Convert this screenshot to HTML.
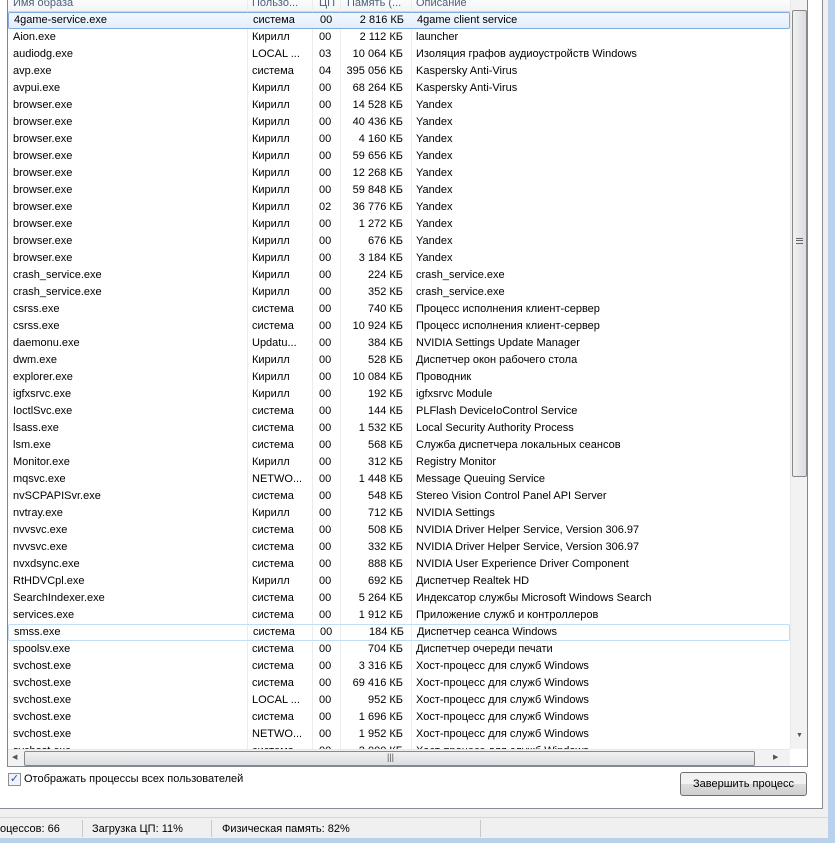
<!DOCTYPE html>
<html><head><meta charset="utf-8"><style>
*{margin:0;padding:0;box-sizing:border-box}
body{width:835px;height:843px;overflow:hidden;background:#b9d1ea;font-family:"Liberation Sans","DejaVu Sans",sans-serif;font-size:11px;color:#000;position:relative}
#win{position:absolute;left:0;top:0;width:828px;height:838px;background:#f0f0f0}
#panel{position:absolute;left:0;top:-5px;width:823px;height:814px;background:#fff;border:1px solid #898c95;border-left:none}
#list{position:absolute;left:7px;top:-5px;width:801px;height:772px;border:1px solid #828790;background:#fff;overflow:hidden}
.hdr{position:absolute;left:0;top:0;width:783px;height:16px;background:linear-gradient(#fff,#f3f4f6);border-bottom:1px solid #d5d5d5}
.hdr span{position:absolute;top:1px;color:#4c607a}
.row{position:absolute;left:0;width:782px;height:17px;line-height:17px;white-space:nowrap}
.row span{position:absolute;top:0}
.c1{left:5px}.c2{left:244px}.c3{left:311px}.c4{left:333px;width:62px;text-align:right}.c5{left:408px}
.sel span,.hov span{top:-1px}
.vl{position:absolute;top:0;height:760px;width:1px;background:#ececec}
.sel{background:linear-gradient(#f1f7fe,#e3eefc);border:1px solid #84acdd;border-radius:2px}
.hov{border:1px solid #c5dcf5;border-radius:2px}
#vs{position:absolute;left:782px;top:0;width:17px;height:753px;background:#f2f2f2;border-left:1px solid #e8e8e8}
#thumb{position:absolute;left:1px;top:14px;width:15px;height:467px;background:linear-gradient(90deg,#f1f1f1,#dcdde2);border:1px solid #888;border-radius:2px}
#hs{position:absolute;left:0;top:753px;width:782px;height:17px;background:#f2f2f2;border-top:1px solid #e8e8e8}
#hthumb{position:absolute;left:16px;top:1px;width:731px;height:15px;background:linear-gradient(#f1f1f1,#dcdde2);border:1px solid #888;border-radius:2px}
.btn{position:absolute;left:680px;top:772px;width:127px;height:24px;border:1px solid #707070;border-radius:3px;background:linear-gradient(#f2f2f2 50%,#dddddd 50%,#cfcfcf);text-align:center;line-height:22px}
#status{position:absolute;left:0;top:817px;width:828px;height:21px;border-top:1px solid #d7d7d7;line-height:22px}
#status span{position:absolute;top:0}
.sep{position:absolute;top:2px;width:1px;height:17px;background:#c8c8c8}
</style></head><body>
<div id="win">
<div id="panel"></div>
<div id="list">
<div class="hdr"><span style="left:5px">Имя образа</span><span style="left:244px">Пользо...</span><span style="left:311px">ЦП</span><span style="left:339px">Память (...</span><span style="left:408px">Описание</span></div>
<div class="vl" style="left:239px"></div><div class="vl" style="left:304px"></div><div class="vl" style="left:332px"></div><div class="vl" style="left:403px"></div>
<div id="rows"></div>
<div id="vs"><div style="position:absolute;top:736px;left:5px;font-size:7px;color:#555">▼</div><div id="thumb"><div style="position:absolute;left:3px;top:227px;width:7px;height:6px;border-top:1px solid #666;border-bottom:1px solid #666"><div style="margin-top:1px;height:2px;border-top:1px solid #666"></div></div></div></div>
<div id="hs"><div style="position:absolute;left:4px;top:3px;font-size:7px;color:#555">◀</div><div id="hthumb"><div style="position:absolute;left:362px;top:0;font-size:9px;color:#555">|||</div></div><div style="position:absolute;left:765px;top:3px;font-size:7px;color:#555">▶</div></div>
</div>
<div style="position:absolute;left:8px;top:773px;width:13px;height:13px;border:1px solid #8f8f8f;background:#eef3fb;color:#2a4f9c;font-size:11px;line-height:11px;text-align:center">✓</div>
<div style="position:absolute;left:24px;top:773px">Отображать процессы всех пользователей</div>
<div class="btn">Завершить процесс</div>
<div id="status">
<span style="left:0">оцессов: 66</span><div class="sep" style="left:82px"></div>
<span style="left:92px">Загрузка ЦП: 11%</span><div class="sep" style="left:211px"></div>
<span style="left:222px">Физическая память: 82%</span><div class="sep" style="left:480px"></div>
</div>
</div>
<script>
var d=[["4game-service.exe","система","00","2 816 КБ","4game client service"],["Aion.exe","Кирилл","00","2 112 КБ","launcher"],["audiodg.exe","LOCAL ...","03","10 064 КБ","Изоляция графов аудиоустройств Windows"],["avp.exe","система","04","395 056 КБ","Kaspersky Anti-Virus"],["avpui.exe","Кирилл","00","68 264 КБ","Kaspersky Anti-Virus"],["browser.exe","Кирилл","00","14 528 КБ","Yandex"],["browser.exe","Кирилл","00","40 436 КБ","Yandex"],["browser.exe","Кирилл","00","4 160 КБ","Yandex"],["browser.exe","Кирилл","00","59 656 КБ","Yandex"],["browser.exe","Кирилл","00","12 268 КБ","Yandex"],["browser.exe","Кирилл","00","59 848 КБ","Yandex"],["browser.exe","Кирилл","02","36 776 КБ","Yandex"],["browser.exe","Кирилл","00","1 272 КБ","Yandex"],["browser.exe","Кирилл","00","676 КБ","Yandex"],["browser.exe","Кирилл","00","3 184 КБ","Yandex"],["crash_service.exe","Кирилл","00","224 КБ","crash_service.exe"],["crash_service.exe","Кирилл","00","352 КБ","crash_service.exe"],["csrss.exe","система","00","740 КБ","Процесс исполнения клиент-сервер"],["csrss.exe","система","00","10 924 КБ","Процесс исполнения клиент-сервер"],["daemonu.exe","Updatu...","00","384 КБ","NVIDIA Settings Update Manager"],["dwm.exe","Кирилл","00","528 КБ","Диспетчер окон рабочего стола"],["explorer.exe","Кирилл","00","10 084 КБ","Проводник"],["igfxsrvc.exe","Кирилл","00","192 КБ","igfxsrvc Module"],["IoctlSvc.exe","система","00","144 КБ","PLFlash DeviceIoControl Service"],["lsass.exe","система","00","1 532 КБ","Local Security Authority Process"],["lsm.exe","система","00","568 КБ","Служба диспетчера локальных сеансов"],["Monitor.exe","Кирилл","00","312 КБ","Registry Monitor"],["mqsvc.exe","NETWO...","00","1 448 КБ","Message Queuing Service"],["nvSCPAPISvr.exe","система","00","548 КБ","Stereo Vision Control Panel API Server"],["nvtray.exe","Кирилл","00","712 КБ","NVIDIA Settings"],["nvvsvc.exe","система","00","508 КБ","NVIDIA Driver Helper Service, Version 306.97"],["nvvsvc.exe","система","00","332 КБ","NVIDIA Driver Helper Service, Version 306.97"],["nvxdsync.exe","система","00","888 КБ","NVIDIA User Experience Driver Component"],["RtHDVCpl.exe","Кирилл","00","692 КБ","Диспетчер Realtek HD"],["SearchIndexer.exe","система","00","5 264 КБ","Индексатор службы Microsoft Windows Search"],["services.exe","система","00","1 912 КБ","Приложение служб и контроллеров"],["smss.exe","система","00","184 КБ","Диспетчер сеанса  Windows"],["spoolsv.exe","система","00","704 КБ","Диспетчер очереди печати"],["svchost.exe","система","00","3 316 КБ","Хост-процесс для служб Windows"],["svchost.exe","система","00","69 416 КБ","Хост-процесс для служб Windows"],["svchost.exe","LOCAL ...","00","952 КБ","Хост-процесс для служб Windows"],["svchost.exe","система","00","1 696 КБ","Хост-процесс для служб Windows"],["svchost.exe","NETWO...","00","1 952 КБ","Хост-процесс для служб Windows"],["svchost.exe","система","00","2 000 КБ","Хост-процесс для служб Windows"]];
var h="";d.forEach(function(r,i){var c=i==0?" sel":(i==36?" hov":"");h+='<div class="row'+c+'" style="top:'+(16+17*i)+'px"><span class="c1">'+r[0]+'</span><span class="c2">'+r[1]+'</span><span class="c3">'+r[2]+'</span><span class="c4">'+r[3]+'</span><span class="c5">'+r[4]+'</span></div>'});
document.getElementById("rows").innerHTML=h;
</script>
</body></html>
